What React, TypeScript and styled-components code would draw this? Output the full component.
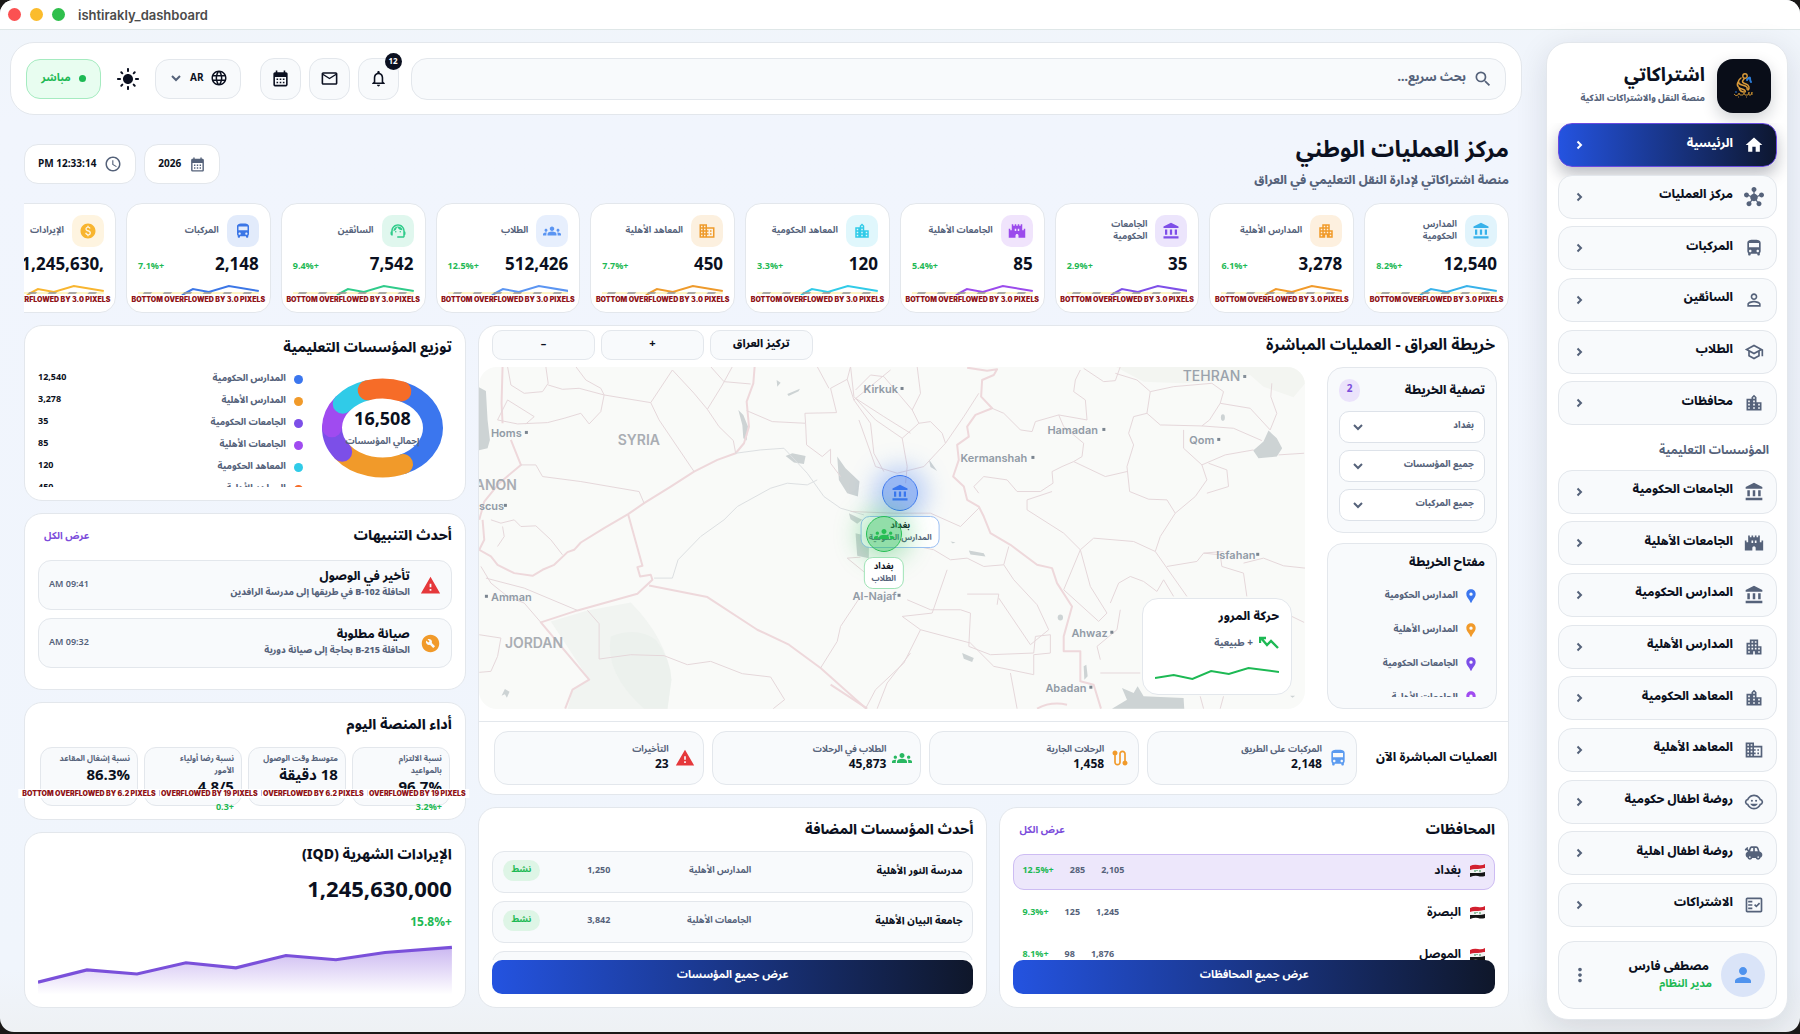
import React from "react";
import styled, { createGlobalStyle, css } from "styled-components";
import type { IconType } from "react-icons";
import {
  MdAccessTime,
  MdAccountBalance,
  MdApartment,
  MdBuildCircle,
  MdCalendarMonth,
  MdCastle,
  MdDirectionsBus,
  MdGroups,
  MdHome,
  MdHub,
  MdLanguage,
  MdLightMode,
  MdLocationCity,
  MdLocationPin,
  MdMailOutline,
  MdMoreVert,
  MdNotificationsNone,
  MdOutlineBusiness,
  MdOutlineChildCare,
  MdOutlineFactCheck,
  MdOutlineSchool,
  MdPaid,
  MdPerson,
  MdPersonOutline,
  MdRoute,
  MdSearch,
  MdSupportAgent,
  MdToys,
  MdWarning,
} from "react-icons/md";

const c = {
  ink: "#0b1020",
  muted: "#55627a",
  line: "#e3e7ec",
  soft: "#f8fafc",
  green: "#1db954",
  purple: "#7c4ddb",
  blue: "#3b76ee",
  orange: "#f19a2a",
  violet: "#a04bf0",
  cyan: "#30cbe8",
  coral: "#f66c28",
  red: "#e5383b",
};

const Global = createGlobalStyle`
  *, *::before, *::after { box-sizing: border-box; }
  html { background: #1b1918; }
  body { margin: 0; font-family: "Noto Sans Arabic", "Noto Kufi Arabic", "Noto Sans", "DejaVu Sans", sans-serif; color: ${c.ink}; }
  button, input, select { font: inherit; color: inherit; }
  h1, h2, h3, p, ul { margin: 0; padding: 0; }
  ul { list-style: none; }
  a { color: inherit; text-decoration: none; }
`;

/* ---------- window frame ---------- */

const Window = styled.div`
  display: flex;
  flex-direction: column;
  height: calc(100vh - 2px);
  min-height: 960px;
  border-radius: 14px;
  overflow: hidden;
  background: linear-gradient(#f0f5fa, #f1f5fd 12%, #f0f5fc 94%, #eef1f4);
`;

const TitleBar = styled.header`
  display: flex;
  align-items: center;
  gap: 9px;
  height: 30px;
  padding: 0 8px;
  background: #fff;
  border-bottom: 1px solid #dfe7e8;
  font: 600 13px/16px Inter, sans-serif;
  color: #4b4b4b;
`;

const Light = styled.button<{ $color: string }>`
  width: 13px;
  height: 13px;
  padding: 0;
  border: 0;
  border-radius: 50%;
  background: ${(p) => p.$color};
`;

const WindowName = styled.span`
  margin-left: 4px;
`;

const Body = styled.div`
  display: flex;
  flex: 1;
  gap: 24px;
  min-height: 0;
  padding: 12px 12px 12px 10px;
`;

/* ---------- sidebar ---------- */

const Sidebar = styled.aside`
  display: flex;
  flex-direction: column;
  width: 242px;
  flex: none;
  background: #fff;
  border: 1px solid ${c.line};
  border-radius: 22px;
  box-shadow: 0 8px 32px rgba(15, 23, 42, 0.12);
`;

const Brand = styled.div`
  display: flex;
  align-items: center;
  gap: 12px;
  height: 80px;
  padding: 6px 16px 0;
`;

const Logo = styled.div`
  display: grid;
  place-items: center;
  flex: none;
  width: 54px;
  height: 54px;
  border-radius: 16px;
  background: #090d18;
  box-shadow: 0 6px 16px rgba(15, 23, 42, 0.2);
`;

const BrandName = styled.p`
  font-size: 19px;
  line-height: 28px;
  font-weight: 700;
`;

const BrandNote = styled.p`
  padding-bottom: 2px;
  font-size: 9px;
  line-height: 20px;
  font-weight: 800;
  color: ${c.muted};
  white-space: nowrap;
`;

const NavList = styled.ul`
  display: flex;
  flex: 1;
  flex-direction: column;
  justify-content: space-between;
  min-height: 0;
  padding: 0 10px 0 11px;
  overflow: hidden;
`;

const NavHeading = styled.li`
  height: 29px;
  padding: 0 8px;
  font-size: 12px;
  line-height: 36px;
  font-weight: 700;
  color: ${c.muted};
`;

const NavLink = styled.a<{ $active?: boolean }>`
  display: flex;
  align-items: center;
  gap: 11px;
  height: 44px;
  padding: 0 12px;
  border: 1px solid ${c.line};
  border-radius: 14px;
  background: ${c.soft};
  font-size: 12px;
  line-height: 20px;
  font-weight: 800;
  svg {
    flex: none;
    color: ${c.muted};
  }
  span {
    padding-bottom: 3px;
  }
  ${(p) =>
    p.$active &&
    css`
      color: #fff;
      border-color: #6a4be0;
      background: linear-gradient(to right, #2453e0, #0d1730);
      box-shadow: 0 8px 16px rgba(15, 23, 42, 0.28);
      svg {
        color: #fff;
      }
    `}
`;

const Grow = styled.span`
  flex: 1;
  min-width: 0;
`;

const UserCard = styled.div`
  display: flex;
  align-items: center;
  gap: 9px;
  height: 68px;
  margin: 14px 10px 10px 11px;
  padding: 0 11px 0 10px;
  border: 1px solid ${c.line};
  border-radius: 16px;
  background: ${c.soft};
`;

const Avatar = styled.span`
  display: grid;
  place-items: center;
  width: 44px;
  height: 44px;
  border-radius: 50%;
  background: #dae4f8;
  color: #4f93ee;
`;

const UserName = styled.p`
  padding-right: 3px;
  font-size: 12px;
  line-height: 18px;
  font-weight: 800;
`;

const UserRole = styled.p`
  font-size: 11px;
  line-height: 16px;
  font-weight: 700;
  color: ${c.green};
`;

const PlainButton = styled.button`
  display: grid;
  place-items: center;
  padding: 0;
  border: 0;
  background: none;
  color: ${c.muted};
`;

const ThemeButton = styled(PlainButton)`
  margin: 0 3px;
  color: ${c.ink};
`;

/* ---------- top bar ---------- */

const Main = styled.main`
  display: flex;
  flex: 1;
  flex-direction: column;
  min-width: 0;
`;

const TopBar = styled.div`
  display: flex;
  align-items: center;
  gap: 12px;
  flex: none;
  height: 73px;
  padding: 0 15px;
  border: 1px solid ${c.line};
  border-radius: 24px;
  background: #fff;
`;

const SearchBox = styled.label`
  display: flex;
  align-items: center;
  gap: 5px;
  flex: 1;
  height: 42px;
  padding: 0 12px;
  border: 1px solid ${c.line};
  border-radius: 16px;
  background: ${c.soft};
  color: ${c.muted};
  input {
    flex: 1;
    min-width: 0;
    border: 0;
    outline: 0;
    background: none;
    padding: 0 2px 2px;
    font-size: 12px;
    line-height: 20px;
    font-weight: 800;
    &::placeholder {
      color: ${c.muted};
      opacity: 1;
    }
  }
`;

const IconGroup = styled.div`
  display: flex;
  gap: 8px;
`;

const IconButton = styled.button`
  position: relative;
  display: grid;
  place-items: center;
  width: 41px;
  height: 42px;
  padding: 0;
  border: 1px solid ${c.line};
  border-radius: 14px;
  background: ${c.soft};
`;

const Counter = styled.span`
  position: absolute;
  top: -6px;
  right: -4px;
  width: 17px;
  height: 17px;
  border-radius: 9px;
  background: ${c.ink};
  color: #fff;
  font-size: 8px;
  line-height: 17px;
  font-weight: 700;
  text-align: center;
`;

const Pill = styled.button<{ $live?: boolean }>`
  display: flex;
  align-items: center;
  justify-content: center;
  gap: 8px;
  min-width: 75px;
  height: 40px;
  padding: 0 12px 1px;
  border: 1px solid ${(p) => (p.$live ? "#a5ebc0" : c.line)};
  border-radius: 14px;
  background: ${(p) => (p.$live ? "#e8fdf0" : c.soft)};
  color: ${(p) => (p.$live ? c.green : c.ink)};
  font-size: 11px;
  line-height: 20px;
  font-weight: 700;
`;

const LangPill = styled(Pill)`
  gap: 6px;
  min-width: 85px;
  margin-right: 7px;
  font-size: 10px;
`;

const Dot = styled.span<{ $color: string; $size: number }>`
  flex: none;
  width: ${(p) => p.$size}px;
  height: ${(p) => p.$size}px;
  border-radius: 50%;
  background: ${(p) => p.$color};
`;

/* ---------- page ---------- */

const Page = styled.div`
  display: flex;
  flex: 1;
  flex-direction: column;
  min-height: 0;
  padding: 16px 13px 12px 14px;
`;

const PageHead = styled.div`
  display: flex;
  justify-content: space-between;
  height: 72px;
  flex: none;
`;

const PageTitle = styled.h1`
  font-size: 23px;
  line-height: 38px;
  font-weight: 700;
`;

const PageNote = styled.p`
  font-size: 12px;
  line-height: 24px;
  font-weight: 800;
  color: ${c.muted};
`;

const Chips = styled.div`
  display: flex;
  gap: 8px;
  padding-top: 13px;
`;

const Chip = styled.span`
  display: flex;
  align-items: center;
  gap: 8px;
  height: 40px;
  padding: 0 13px;
  border: 1px solid ${c.line};
  border-radius: 14px;
  background: #fff;
  font-size: 10px;
  line-height: 20px;
  font-weight: 700;
  svg {
    color: ${c.muted};
  }
`;

const KpiRow = styled.ul`
  display: flex;
  gap: 10px;
  flex: none;
  height: 110px;
  margin-bottom: 12px;
  overflow: hidden;
`;

const KpiCard = styled.li`
  position: relative;
  display: flex;
  flex: none;
  flex-direction: column;
  width: 9.75%;
  padding: 11px;
  border: 1px solid ${c.line};
  border-radius: 16px;
  background: #fff;
`;

const KpiHead = styled.div`
  display: flex;
  align-items: center;
  gap: 8px;
  height: 32px;
`;

const KpiIcon = styled.span<{ $color: string }>`
  display: grid;
  place-items: center;
  flex: none;
  width: 32px;
  height: 32px;
  border-radius: 10px;
  color: ${(p) => p.$color};
  background: ${(p) => p.$color}26;
`;

const KpiLabel = styled.h3<{ $wrap?: boolean }>`
  width: ${(p) => (p.$wrap ? "48px" : "auto")};
  font-size: 9px;
  line-height: 12px;
  font-weight: 700;
  color: ${c.muted};
  white-space: ${(p) => (p.$wrap ? "normal" : "nowrap")};
`;

const KpiFigures = styled.div`
  display: flex;
  align-items: center;
  justify-content: space-between;
  height: 36px;
`;

const KpiValue = styled.bdi<{ $size?: number }>`
  font-size: ${(p) => p.$size ?? 17}px;
  line-height: 24px;
  font-weight: 700;
`;

const Delta = styled.span`
  font-size: 9px;
  line-height: 16px;
  font-weight: 700;
  color: ${c.green};
`;

const KpiDelta = styled(Delta)`
  padding-top: 4px;
`;

const Spark = styled.svg`
  display: block;
  width: 100%;
  height: 13px;
`;

const Overflowed = styled.span`
  position: absolute;
  height: 9px;
  background: #fff;
  color: #8f1216;
  font: 900 7px/9px Inter, sans-serif;
  text-align: center;
  white-space: nowrap;
  direction: ltr;
`;

const KpiWarning = styled(Overflowed)`
  bottom: 8px;
  left: 2px;
  right: 2px;
`;

const Board = styled.div`
  display: flex;
  flex: 1;
  gap: 12px;
  min-height: 0;
`;

const Column = styled.div<{ $grow: number; $rows: string }>`
  display: grid;
  flex: ${(p) => p.$grow} 1 0;
  grid-template-rows: ${(p) => p.$rows};
  gap: 12px;
  min-width: 0;
  min-height: 0;
`;

const Split = styled.div`
  display: grid;
  grid-template-columns: 1fr 1fr;
  gap: 12px;
  min-height: 0;
`;

const Card = styled.section<{ $flush?: boolean }>`
  display: flex;
  flex-direction: column;
  min-width: 0;
  min-height: 0;
  padding: ${(p) => (p.$flush ? "0" : "8px 13px 13px")};
  border: 1px solid ${c.line};
  border-radius: 18px;
  background: #fff;
`;

const CardHead = styled.div<{ $after?: number }>`
  display: flex;
  align-items: center;
  justify-content: space-between;
  flex: none;
  height: 28px;
  margin-bottom: ${(p) => p.$after ?? 0}px;
`;

const CardTitle = styled.h2<{ $large?: boolean }>`
  font-size: ${(p) => (p.$large ? 16 : 14)}px;
  line-height: 24px;
  font-weight: ${(p) => (p.$large ? 700 : 800)};
`;

const SmallTitle = styled.h3`
  font-size: 12px;
  line-height: 20px;
  font-weight: 800;
  white-space: nowrap;
`;

const MoreLink = styled.a`
  padding: 0 6px;
  font-size: 10px;
  line-height: 20px;
  font-weight: 700;
  color: ${c.purple};
`;

/* ---------- map card ---------- */

const MapHead = styled.div`
  display: flex;
  align-items: center;
  justify-content: space-between;
  flex: none;
  height: 41px;
  padding: 0 13px 4px;
`;

const MapTools = styled.div`
  display: flex;
  gap: 6px;
`;

const MapTool = styled.button`
  width: 103px;
  height: 30px;
  padding: 0 0 2px;
  border: 1px solid ${c.line};
  border-radius: 10px;
  background: ${c.soft};
  font-size: 11px;
  line-height: 20px;
  font-weight: 800;
`;

const MapRow = styled.div`
  display: flex;
  flex: 1;
  gap: 22px;
  min-height: 0;
  padding-right: 11px;
`;

const MapSide = styled.div`
  display: flex;
  flex-direction: column;
  gap: 10px;
  width: 170px;
  flex: none;
`;

const SideBox = styled.div<{ $fill?: boolean }>`
  display: flex;
  flex: ${(p) => (p.$fill ? "1" : "none")};
  flex-direction: column;
  gap: ${(p) => (p.$fill ? 6 : 7)}px;
  min-height: 0;
  padding: 9px 11px 11px;
  border: 1px solid ${c.line};
  border-radius: 16px;
  background: ${c.soft};
`;

const SideHead = styled.div`
  display: flex;
  align-items: center;
  justify-content: space-between;
  height: 27px;
`;

const Badge = styled.span`
  width: 21px;
  height: 23px;
  border-radius: 12px;
  background: #ebe3fb;
  color: ${c.purple};
  font-size: 10px;
  line-height: 20px;
  font-weight: 700;
  text-align: center;
`;

const SelectBox = styled.div`
  position: relative;
  select {
    display: block;
    width: 100%;
    height: 32px;
    padding: 0 10px 2px 36px;
    border: 1px solid #dde2e9;
    border-radius: 10px;
    background: #fff;
    appearance: none;
    color: ${c.muted};
    font-size: 9px;
    line-height: 16px;
    font-weight: 800;
  }
  svg {
    position: absolute;
    left: 11px;
    top: 8px;
    color: ${c.muted};
    pointer-events: none;
  }
`;

const LegendList = styled.ul`
  flex: 1;
  min-height: 0;
  overflow: hidden;
`;

const LegendItem = styled.li`
  display: flex;
  align-items: center;
  gap: 5px;
  height: 34px;
  padding: 0 6px;
  font-size: 9px;
  line-height: 16px;
  font-weight: 800;
  color: ${c.muted};
`;

const MapCanvas = styled.div`
  position: relative;
  flex: 1;
  min-width: 0;
  border-radius: 18px;
  overflow: hidden;
  background: #f9faf8;
`;

const MapArt = styled.svg`
  display: block;
  width: 100%;
  height: 100%;
  font-family: Inter, sans-serif;
`;

const Marker = styled.span<{ $rgb: string }>`
  position: absolute;
  display: grid;
  place-items: center;
  width: 36px;
  height: 36px;
  margin: -18px 0 0 -18px;
  border: 1px solid rgb(${(p) => p.$rgb});
  border-radius: 50%;
  background: rgba(${(p) => p.$rgb}, 0.5);
  color: rgb(${(p) => p.$rgb});
  box-shadow: 0 0 24px 8px rgba(${(p) => p.$rgb}, 0.36);
`;

const MarkerCard = styled.span<{ $edge: string }>`
  position: absolute;
  padding: 3px 7px;
  border: 1px solid ${(p) => p.$edge};
  border-radius: 9px;
  background: rgba(255, 255, 255, 0.94);
  font-size: 9px;
  line-height: 12px;
  font-weight: 700;
  text-align: center;
  white-space: nowrap;
  transform: translateX(-50%);
  small {
    display: block;
    font-size: 8px;
    color: ${c.muted};
  }
`;

const Traffic = styled.div`
  position: absolute;
  right: 13px;
  bottom: 14px;
  width: 150px;
  height: 97px;
  padding: 8px 12px;
  border: 1px solid ${c.line};
  border-radius: 16px;
  background: #fff;
`;

const TrafficState = styled.p`
  display: flex;
  align-items: center;
  gap: 6px;
  height: 32px;
  font-size: 10px;
  line-height: 16px;
  font-weight: 700;
  color: ${c.muted};
`;

const TrafficSpark = styled.svg`
  display: block;
  width: 100%;
  height: 18px;
  margin-top: 5px;
`;

const LiveRow = styled.div`
  display: flex;
  align-items: center;
  gap: 8px;
  flex: none;
  height: 73px;
  margin-top: 12px;
  padding: 0 11px 0 15px;
  border-top: 1px solid ${c.line};
`;

const LiveTitle = styled.div`
  flex: none;
  width: 132px;
`;

const Stat = styled.div`
  display: flex;
  align-items: center;
  gap: 6px;
  flex: 1;
  height: 54px;
  padding: 0 8px;
  border: 1px solid ${c.line};
  border-radius: 14px;
  background: ${c.soft};
`;

const StatLabel = styled.p`
  font-size: 9px;
  line-height: 14px;
  font-weight: 700;
  color: ${c.muted};
`;

const StatValue = styled.p`
  font-size: 12px;
  line-height: 16px;
  font-weight: 700;
`;

/* ---------- tables ---------- */

const TableClip = styled.div`
  flex: 1;
  min-height: 0;
  overflow: hidden;
`;

const Rows = styled.table`
  display: block;
  tbody {
    display: flex;
    flex-direction: column;
  }
  td {
    padding: 0;
  }
`;

const ProvinceRows = styled(Rows)`
  tbody {
    gap: 6px;
  }
`;

const SchoolRows = styled(Rows)`
  tbody {
    gap: 8px;
  }
`;

const ProvinceRow = styled.tr<{ $on?: boolean }>`
  display: flex;
  align-items: center;
  gap: 16px;
  height: 36px;
  padding: 0 8px 2px;
  border: 1px solid ${(p) => (p.$on ? "#cdbcf3" : "transparent")};
  border-radius: 11px;
  background: ${(p) => (p.$on ? "#ede7fb" : "transparent")};
  font-size: 9px;
  line-height: 16px;
  font-weight: 700;
  color: ${c.muted};
`;

const ProvinceName = styled.td`
  display: flex;
  flex: 1;
  align-items: center;
  gap: 8px;
  color: ${c.ink};
  font-size: 12px;
  line-height: 20px;
`;

const SchoolRow = styled.tr`
  display: grid;
  grid-template-columns: 3fr 2fr 1fr 37px;
  align-items: center;
  height: 42px;
  padding: 0 10px 2px;
  border: 1px solid ${c.line};
  border-radius: 12px;
  background: ${c.soft};
  font-size: 9px;
  line-height: 16px;
  font-weight: 700;
  color: ${c.muted};
`;

const SchoolName = styled.td`
  color: ${c.ink};
  font-size: 10px;
  font-weight: 800;
`;

const Status = styled.span`
  display: block;
  height: 21px;
  border-radius: 11px;
  background: #def5e6;
  color: ${c.green};
  font-size: 9px;
  line-height: 20px;
  text-align: center;
`;

const WideButton = styled.button`
  flex: none;
  height: 34px;
  padding: 0 0 3px;
  border: 0;
  border-radius: 10px;
  background: linear-gradient(to right, #2453e0, #0f172a);
  color: #fff;
  font-size: 11px;
  line-height: 20px;
  font-weight: 700;
`;

/* ---------- left column ---------- */

const ShareRow = styled.div`
  display: flex;
  gap: 18px;
  flex: 1;
  min-height: 0;
  margin-top: 4px;
  padding-right: 8px;
`;

const DonutBox = styled.div`
  position: relative;
  flex: none;
  width: 123px;
  height: 124px;
`;

const DonutText = styled.div`
  position: absolute;
  inset: 0;
  display: flex;
  flex-direction: column;
  align-items: center;
  justify-content: center;
  gap: 4px;
  white-space: nowrap;
`;

const ShareList = styled.ul`
  flex: 1;
  padding-top: 2px;
  overflow: hidden;
`;

const ShareItem = styled.li`
  display: flex;
  align-items: center;
  gap: 8px;
  height: 22px;
  font-size: 9px;
  line-height: 16px;
  font-weight: 800;
  color: ${c.muted};
  b {
    padding-bottom: 3px;
    font-weight: 700;
    color: ${c.ink};
  }
`;

const AlertList = styled.ul`
  display: flex;
  flex-direction: column;
  gap: 8px;
  margin-top: 10px;
`;

const AlertItem = styled.li`
  display: flex;
  align-items: center;
  gap: 10px;
  height: 50px;
  padding: 0 10px;
  border: 1px solid ${c.line};
  border-radius: 13px;
  background: ${c.soft};
`;

const AlertNote = styled.p`
  font-size: 9px;
  line-height: 16px;
  font-weight: 800;
  color: ${c.muted};
`;

const AlertTime = styled(AlertNote)`
  font-weight: 600;
`;

const AlertTitle = styled.h3`
  font-size: 12px;
  line-height: 16px;
  font-weight: 800;
`;

const ScoreGrid = styled.ul`
  display: grid;
  grid-template-columns: repeat(4, 1fr);
  gap: 6px;
  margin-top: 8px;
  padding: 0 2px;
`;

const Score = styled.li`
  position: relative;
  height: 59px;
  padding: 5px 7px 0 6px;
  border: 1px solid ${c.line};
  border-radius: 12px;
  background: ${c.soft};
`;

const ScoreLabel = styled.p`
  font-size: 8px;
  line-height: 12px;
  font-weight: 700;
  color: ${c.muted};
  white-space: pre-line;
`;

const ScoreValue = styled.p`
  font-size: 15px;
  line-height: 20px;
  font-weight: 700;
  white-space: nowrap;
`;

const ScoreDelta = styled.p`
  margin-top: 5px;
  font-size: 9px;
  line-height: 12px;
  font-weight: 700;
  color: ${c.green};
`;

const ScoreWarning = styled(Overflowed)`
  top: 41px;
  left: 50%;
  padding: 0 4px;
  transform: translateX(-50%);
`;

const Revenue = styled.p`
  margin-top: 5px;
  font-size: 22px;
  line-height: 32px;
  font-weight: 700;
`;

const Growth = styled.p`
  margin-top: 9px;
  font-size: 12px;
  line-height: 16px;
  font-weight: 700;
  color: ${c.green};
`;

const AreaChart = styled.svg`
  display: block;
  flex: 1;
  width: 100%;
  min-height: 0;
`;

/* ---------- data ---------- */

type NavEntry = { label: string; icon: IconType };

const primaryNav: NavEntry[] = [
  { label: "الرئيسية", icon: MdHome },
  { label: "مركز العمليات", icon: MdHub },
  { label: "المركبات", icon: MdDirectionsBus },
  { label: "السائقين", icon: MdPersonOutline },
  { label: "الطلاب", icon: MdOutlineSchool },
  { label: "محافظات", icon: MdLocationCity },
];

const schoolNav: NavEntry[] = [
  { label: "الجامعات الحكومية", icon: MdAccountBalance },
  { label: "الجامعات الأهلية", icon: MdCastle },
  { label: "المدارس الحكومية", icon: MdAccountBalance },
  { label: "المدارس الأهلية", icon: MdApartment },
  { label: "المعاهد الحكومية", icon: MdLocationCity },
  { label: "المعاهد الأهلية", icon: MdOutlineBusiness },
  { label: "روضة اطفال حكومية", icon: MdOutlineChildCare },
  { label: "روضة اطفال اهلية", icon: MdToys },
  { label: "الاشتراكات", icon: MdOutlineFactCheck },
];

const kpis = [
  { label: "المدارس الحكومية", value: "12,540", delta: "+8.2%", color: "#38b2ea", icon: MdAccountBalance, wrap: true },
  { label: "المدارس الأهلية", value: "3,278", delta: "+6.1%", color: "#f19a2a", icon: MdApartment },
  { label: "الجامعات الحكومية", value: "35", delta: "+2.9%", color: "#7e4fe8", icon: MdAccountBalance, wrap: true },
  { label: "الجامعات الأهلية", value: "85", delta: "+5.4%", color: "#9b4bec", icon: MdCastle },
  { label: "المعاهد الحكومية", value: "120", delta: "+3.3%", color: "#30cbe8", icon: MdLocationCity },
  { label: "المعاهد الأهلية", value: "450", delta: "+7.7%", color: "#ee9a2b", icon: MdOutlineBusiness },
  { label: "الطلاب", value: "512,426", delta: "+12.5%", color: "#5b95f2", icon: MdGroups },
  { label: "السائقين", value: "7,542", delta: "+9.4%", color: "#2fcb8a", icon: MdSupportAgent },
  { label: "المركبات", value: "2,148", delta: "+7.1%", color: "#3b76e6", icon: MdDirectionsBus },
  { label: "الإيرادات", value: "...1,245,630,", delta: "", color: "#f8b52f", icon: MdPaid },
];

const shares = [
  { label: "المدارس الحكومية", value: "12,540", color: c.blue },
  { label: "المدارس الأهلية", value: "3,278", color: c.orange },
  { label: "الجامعات الحكومية", value: "35", color: "#7c4fe8" },
  { label: "الجامعات الأهلية", value: "85", color: c.violet },
  { label: "المعاهد الحكومية", value: "120", color: c.cyan },
  { label: "المعاهد الأهلية", value: "450", color: c.coral },
];

// Start and end angle of each ring segment, in degrees clockwise from three o'clock.
const arcs = [-66, 66, 143, 181, 218, 253, 292];

const ringPoint = (deg: number) => {
  const a = (deg * Math.PI) / 180;
  return `${(61.5 + 50.5 * Math.cos(a)).toFixed(1)} ${(62 + 39.5 * Math.sin(a)).toFixed(1)}`;
};

const stats = [
  { label: "المركبات على الطريق", value: "2,148", icon: MdDirectionsBus, color: "#5b9bf0" },
  { label: "الرحلات الجارية", value: "1,458", icon: MdRoute, color: c.orange },
  { label: "الطلاب في الرحلات", value: "45,873", icon: MdGroups, color: "#29b862" },
  { label: "التأخيرات", value: "23", icon: MdWarning, color: c.red },
];

const provinces = [
  { name: "بغداد", a: "2,105", b: "285", delta: "+12.5%" },
  { name: "البصرة", a: "1,245", b: "125", delta: "+9.3%" },
  { name: "الموصل", a: "1,876", b: "98", delta: "+8.1%" },
];

const schools = [
  { name: "مدرسة النور الأهلية", type: "المدارس الأهلية", count: "1,250" },
  { name: "جامعة البيان الأهلية", type: "الجامعات الأهلية", count: "3,842" },
  { name: "معهد الرافدين", type: "المعاهد الأهلية", count: "640" },
];

const scores = [
  { label: "نسبة الالتزام\nبالمواعيد", value: "96.7%", delta: "+3.2%", over: "19" },
  { label: "متوسط وقت الوصول", value: "18 دقيقة", delta: "", over: "6.2" },
  { label: "نسبة رضا أولياء\nالأمور", value: "4.8/5", delta: "+0.3", over: "19" },
  { label: "نسبة إشغال المقاعد", value: "86.3%", delta: "", over: "6.2" },
];

const cities = [
  { name: "Kirkuk", x: 385, y: 26, dot: 424 },
  { name: "Homs", x: 12, y: 70, dot: 48 },
  { name: "Amman", x: 12, y: 234, dot: 8 },
  { name: "Al-Najaf", x: 374, y: 233, dot: 421 },
  { name: "Hamadan", x: 569, y: 67, dot: 626 },
  { name: "Kermanshah", x: 482, y: 95, dot: 555 },
  { name: "Qom", x: 711, y: 77, dot: 741 },
  { name: "Isfahan", x: 738, y: 192, dot: 780 },
  { name: "Ahwaz", x: 593, y: 270, dot: 634 },
  { name: "Abadan", x: 567, y: 325, dot: 613 },
  { name: "scus", x: 0, y: 143, dot: 27 },
];

const filters = ["بغداد", "جميع المؤسسات", "جميع المركبات"];

/* ---------- drawings ---------- */

const BrandMark = () => (
  <svg width="24" height="28" viewBox="0 0 24 28" aria-hidden="true" fill="none">
    <circle cx="13" cy="4" r="2.2" stroke="#d99a3a" strokeWidth="1.4" />
    <path d="M9 6c-4 3-3 6 1 7s6 2 5 4M12 7c-3 3-1 4 2 5s4 4 2 6M6 10c-2 4 1 6 4 7s4 2 3 3M7 16c1 3 3 4 5 4" stroke="#d99a3a" strokeWidth="1.5" strokeLinecap="round" />
    <path d="M15 8c1-2 3-3 3-2s0 3 1 4" stroke="#2b7bd6" strokeWidth="2" strokeLinecap="round" />
    <path d="M2 22q2 3 4 1l1-2 1 2h3l1-2 1 2h3l1-3v3h2l1-3v3M6 25h1M14 25h1" stroke="#b9852f" strokeWidth="1" />
    <path d="M3 20h2" stroke="#2b7bd6" strokeWidth="1" />
  </svg>
);

const ChevronRight = () => (
  <svg width="16" height="16" viewBox="0 0 16 16" fill="none" stroke="currentColor" strokeWidth="2" aria-hidden="true">
    <path d="M6.5 4.5L10 8l-3.500 3.500" />
  </svg>
);

const ChevronDown = () => (
  <svg width="16" height="16" viewBox="0 0 16 16" fill="none" stroke={c.muted} strokeWidth="2" aria-hidden="true">
    <path d="M4 6l4 4 4-4" />
  </svg>
);

const TrendMark = () => (
  <svg width="20" height="14" viewBox="0 0 20 14" fill="none" stroke={c.green} strokeWidth="2.4" aria-hidden="true">
    <path d="M2 2l6 7 4-4 7 7M1 7V2h6" />
  </svg>
);

const Flag = () => (
  <svg width="17" height="13" viewBox="0 0 17 13" aria-hidden="true">
    <path d="M1 2q4-2 8-1t7-1v4q-4 1-7 1t-8 1z" fill="#d2202f" />
    <path d="M1 6q4-1 8-1t7-1v4q-4 1-7 1t-8 0z" fill="#f4f4f4" />
    <path d="M1 9q4 0 8 0t7-1v4q-4 1-7 0t-8 1z" fill="#151515" />
    <path d="M5 7h2M8 6v1M10 7h2" stroke="#2f8f4e" strokeWidth="1" />
  </svg>
);

const KpiSpark = ({ color, id }: { color: string; id: string }) => (
  <Spark viewBox="0 0 121 13" preserveAspectRatio="none" aria-hidden="true">
    <defs>
      <pattern id={id} width="20" height="4" patternUnits="userSpaceOnUse">
        <rect width="20" height="4" fill="#fbf3b8" />
        <path d="M4 4l3-4h8l-3 4z" fill="#9a9a94" />
      </pattern>
    </defs>
    <path d="M44 12L55 6L71 9L91 3L121 8" fill="none" stroke={color} strokeWidth="2" />
    <rect y="9" width="121" height="2" fill={`url(#${id})`} opacity=".85" />
  </Spark>
);

const RegionMap = () => (
  <MapArt viewBox="0 0 827 342" preserveAspectRatio="xMidYMid slice" role="img" aria-label="خريطة العراق">
    <g transform="translate(-8 -47) scale(.3333)" fill="none" strokeLinejoin="round">
      <path d="M240 905L350 872L480 848Q590 960 602 1080L590 1170H290L305 1110L355 1080z" fill="#f1f4f1" />
      <path d="M420 950Q500 920 555 960Q600 1020 602 1080L590 1167H520Q400 1060 420 950z" fill="#ecf1ed" />
      <g fill="#cdd3d4">
        <path d="M20 200L45 213L50 300L57 360L50 385L20 392z" />
        <path d="M1100 410L1125 445L1167 485L1162 530L1130 520L1105 480z" />
        <path d="M945 408L965 400L1005 408L1000 432L970 428z" />
        <path d="M1135 580L1175 600L1160 612L1140 598zM1155 640L1195 650L1195 715L1160 708z" />
        <path d="M803 270L818 285L832 320L828 362L818 355L815 315z" />
        <path d="M918 180l12 8-10 12zM950 222l38-16-4 8-30 14zM92 1128l10-20 14 8-8 18-6-10z" />
      </g>
      <g stroke="#eed8db" strokeWidth="6">
        <path d="M852 140L848 190L828 245L835 320L820 370L795 400L740 420L670 455L600 500L520 550L472 583L400 625L330 668L310 690L290 697L250 735L215 750L185 768L130 760L80 735L60 710L25 690" />
        <path d="M472 583L515 738L500 742L508 770L540 765L545 780L500 822L320 872L210 908L355 1080L305 1110L283 1167" />
        <path d="M535 797L710 832L860 930L955 975L1050 1045L1187 1167" />
        <path d="M25 600L40 545L85 490L150 435L128 380L120 360M95 140L92 250L95 310M25 690L40 660L35 600" />
      </g>
      <g stroke="#e5d7da" strokeWidth="3">
        <path d="M110 140L120 195L160 220L215 215L232 190L225 140M232 195L275 208L325 205L400 225L390 275L355 312L330 280L280 295L230 308L140 312L80 300L110 240L190 290L165 312" />
        <path d="M315 140L345 180L390 205L400 225L540 248L605 150L670 220L710 268L745 320L788 362L795 400M540 248L565 300L670 455M710 268L755 195L785 140M720 140L760 185L840 192M828 272L905 305L1005 310L1003 280L1098 278L1080 205L1130 178L1150 240L1200 310L1210 400L1240 455" />
        <path d="M1005 310L1008 375L1055 410L1080 388L1080 430L1110 470M1040 140L1075 205M1130 178L1140 140M1150 240L1260 150M1155 235L1240 290L1320 340" />
        <path d="M150 435L195 435L215 470L330 485L505 515L520 550M60 600L90 610L130 600L150 620L195 618L240 660L275 705M80 680L100 650L95 620M30 740L60 790L110 830L160 850L210 908M45 775L160 805L320 872M25 945L90 955L80 1010L60 1055L25 1058" />
        <path d="M350 872L385 912L385 1018L480 1005L580 1008L650 1035L720 1025L815 1062L900 1072L942 1140L908 1167" />
        <path d="M795 400L870 390L940 385L1010 460L1060 530L1110 565L1180 585M550 775L605 775L622 720L690 650L760 600L800 560L900 505L950 490L1010 495L1040 480" stroke="#dcdfe1" />
        <path d="M1170 830L1110 920L1100 965L1050 1045M1320 1000L1250 1090L1220 1167M1130 715L1185 760M1130 715L1170 712" />
      </g>
    </g>
    <g transform="translate(372 -47) scale(.3333)" fill="none" strokeLinejoin="round">
      <path d="M795 140H1365V190L1330 232L1240 200L1200 165L1120 180L1000 190L880 185z" fill="#f3f5f1" />
      <g fill="#cdd3d4">
        <path d="M1255 332L1280 355L1296 385L1280 410L1225 415L1209 392L1240 365z" />
        <path d="M815 1105L850 1120L862 1100L880 1130L1000 1135L1002 1167H785L830 1140z" />
        <path d="M335 1000l35 15-5 12-25-10zM700 1040l8-5 4 35-10 10zM355 692l45 8 5 10-45-6zM235 418l25 35-20-12z" />
        <ellipse cx="1118" cy="293" rx="6" ry="10" />
        <ellipse cx="630" cy="893" rx="8" ry="9" />
        <path d="M1320 1128l15 0-8 6zM300 665l15 2-8 4z" />
      </g>
      <g stroke="#eed8db" strokeWidth="6">
        <path d="M350 143L410 152L440 148L430 165L395 180L392 230L425 265L375 285L350 320L355 350L320 375L325 420L308 470L340 500L350 540L385 560L400 590L420 640L480 675L560 735L605 745L620 790L665 860L640 950L640 995L690 995L690 1085L730 1095L752 1167" />
        <path d="M560 1167Q600 1145 650 1155M-60 1095L50 1167" />
      </g>
      <g stroke="#e5d7da" strokeWidth="3">
        <path d="M425 265L460 280L510 330L545 335L555 305L625 285L710 300L705 240L670 215L675 180L690 150M700 145L760 185L795 182L810 140M795 160L860 180L900 215L890 280L850 290L835 340L850 375L830 440L838 515L895 538L950 540L975 580L930 650L915 695L850 665L730 655L690 690L640 810L745 905L770 880L720 800L690 690" />
        <path d="M900 215L970 200L1085 190L1120 215L1110 250L1078 300L1055 318L930 315L890 280M1110 250L1200 265L1260 330L1280 280L1262 230L1265 190M1055 318L1150 325L1235 362M1000 330L1000 385L1055 435L1125 405L1210 390M1285 405L1362 400M1055 435L1070 480L1035 530L975 580M1075 430L1130 450L1135 500L1070 520" />
        <path d="M625 285L640 320L700 370L695 410L670 425L635 440L605 455L608 490L570 515L500 515L470 480L400 470L370 500L385 520M670 425L765 470L830 455M605 515L530 540L530 570L640 640L690 690M915 695L1010 830M950 740L1040 725L1060 700L1110 705L1115 740L1180 760L1190 830M1060 700L1120 695M1180 730L1240 715L1300 738L1365 745M780 850L805 790L840 770L880 785L920 815L940 780L970 830M1325 890L1362 908" />
        <path d="M0 140L10 230L75 300L155 355L170 440L165 490M200 140L210 220L185 270L100 170L60 165L15 210M185 270L205 310L240 305L275 340L285 370L340 290L385 220M155 355L205 310M25 300L75 440L140 460L220 440L285 370" />
        <path d="M0 575L130 580L240 580L330 620L385 565M180 675L250 690L300 720L350 715L400 740L460 735L475 680M460 735L490 780L560 855L595 930L540 975L445 835M350 823H445L440 855M170 840L240 870L330 870L360 880L355 980L420 1005L550 1000L555 950L600 945L600 1000L550 1005L550 1065L430 1040L360 970L210 930L155 890L245 880M245 880L290 750M210 930L160 1030L75 1110L45 1167M480 1060L500 1167" />
        <path d="M750 1020L740 980L800 930L810 870M750 1060L870 1060M1050 1130L1060 1167M1120 1130L1110 1167" />
      </g>
    </g>
    <g fill="#a9adb3" fontSize="14" fontWeight="600">
      <text x="139" y="78">SYRIA</text>
      <text x="26" y="281">JORDAN</text>
      <text x="38" y="123" textAnchor="end">ANON</text>
      <text x="762" y="14" textAnchor="end" fill="#9aa2ab" fontWeight="500">TEHRAN</text>
      <rect x="765" y="8" width="3" height="3" fill="#858f99" />
    </g>
    <g fill="#919ba6" fontSize="11" fontWeight="600">
      {cities.map((city) => (
        <g key={city.name}>
          <text x={city.x} y={city.y}>{city.name}</text>
          <rect x={city.dot - 2} y={city.y - 6} width="3" height="3" fill="#7b8590" />
        </g>
      ))}
    </g>
  </MapArt>
);

/* ---------- parts ---------- */

const NavRow = ({ entry, active }: { entry: NavEntry; active?: boolean }) => (
  <li>
    <NavLink href="#" $active={active}>
      <entry.icon size={20} />
      <Grow>{entry.label}</Grow>
      <ChevronRight />
    </NavLink>
  </li>
);

export default function App() {
  return (
    <>
      <Global />
      <Window>
        <TitleBar>
          <Light $color="#fb5152" aria-label="Close" />
          <Light $color="#fbbc2c" aria-label="Minimize" />
          <Light $color="#2fbf4c" aria-label="Zoom" />
          <WindowName>ishtirakly_dashboard</WindowName>
        </TitleBar>
        <Body dir="rtl">
          <Sidebar>
            <Brand>
              <Logo>
                <BrandMark />
              </Logo>
              <div>
                <BrandName>اشتراكاتي</BrandName>
                <BrandNote>منصة النقل والاشتراكات الذكية</BrandNote>
              </div>
            </Brand>
            <NavList>
              {primaryNav.map((entry, i) => (
                <NavRow key={entry.label} entry={entry} active={i === 0} />
              ))}
              <NavHeading>المؤسسات التعليمية</NavHeading>
              {schoolNav.map((entry) => (
                <NavRow key={entry.label} entry={entry} />
              ))}
            </NavList>
            <UserCard>
              <Avatar>
                <MdPerson size={24} />
              </Avatar>
              <Grow>
                <UserName>مصطفى فارس</UserName>
                <UserRole>مدير النظام</UserRole>
              </Grow>
              <PlainButton aria-label="المزيد">
                <MdMoreVert size={22} />
              </PlainButton>
            </UserCard>
          </Sidebar>

          <Main>
            <TopBar>
              <SearchBox>
                <MdSearch size={20} />
                <input type="text" placeholder="بحث سريع..." aria-label="بحث سريع" />
              </SearchBox>
              <IconGroup>
                <IconButton aria-label="الإشعارات">
                  <MdNotificationsNone size={19} />
                  <Counter>12</Counter>
                </IconButton>
                <IconButton aria-label="الرسائل">
                  <MdMailOutline size={19} />
                </IconButton>
                <IconButton aria-label="التقويم">
                  <MdCalendarMonth size={19} />
                </IconButton>
              </IconGroup>
              <LangPill>
                <MdLanguage size={18} />
                AR
                <ChevronDown />
              </LangPill>
              <ThemeButton aria-label="الوضع النهاري">
                <MdLightMode size={24} />
              </ThemeButton>
              <Pill $live>
                <Dot $color={c.green} $size={7} />
                مباشر
              </Pill>
            </TopBar>

            <Page>
              <PageHead>
                <div>
                  <PageTitle>مركز العمليات الوطني</PageTitle>
                  <PageNote>منصة اشتراكاتي لإدارة النقل التعليمي في العراق</PageNote>
                </div>
                <Chips>
                  <Chip>
                    <MdCalendarMonth size={17} />
                    2026
                  </Chip>
                  <Chip>
                    <MdAccessTime size={18} />
                    12:33:14 PM
                  </Chip>
                </Chips>
              </PageHead>

              <KpiRow>
                {kpis.map((k, i) => (
                  <KpiCard key={k.label}>
                    <KpiHead>
                      <KpiIcon $color={k.color}>
                        <k.icon size={18} />
                      </KpiIcon>
                      <KpiLabel $wrap={k.wrap}>{k.label}</KpiLabel>
                    </KpiHead>
                    <KpiFigures>
                      <KpiValue dir="ltr">{k.value}</KpiValue>
                      <KpiDelta>{k.delta}</KpiDelta>
                    </KpiFigures>
                    <KpiSpark color={k.color} id={`stripe${i}`} />
                    <KpiWarning>BOTTOM OVERFLOWED BY 3.0 PIXELS</KpiWarning>
                  </KpiCard>
                ))}
              </KpiRow>

              <Board>
                <Column $grow={7} $rows="7fr 3fr">
                  <Card $flush>
                    <MapHead>
                      <CardTitle $large>خريطة العراق - العمليات المباشرة</CardTitle>
                      <MapTools>
                        <MapTool>تركيز العراق</MapTool>
                        <MapTool>+</MapTool>
                        <MapTool>–</MapTool>
                      </MapTools>
                    </MapHead>
                    <MapRow>
                      <MapSide>
                        <SideBox>
                          <SideHead>
                            <SmallTitle>تصفية الخريطة</SmallTitle>
                            <Badge>2</Badge>
                          </SideHead>
                          {filters.map((f) => (
                            <SelectBox key={f}>
                              <select aria-label={f} defaultValue={f}>
                                <option>{f}</option>
                              </select>
                              <ChevronDown />
                            </SelectBox>
                          ))}
                        </SideBox>
                        <SideBox $fill>
                          <SmallTitle>مفتاح الخريطة</SmallTitle>
                          <LegendList>
                            {shares.slice(0, 4).map((s) => (
                              <LegendItem key={s.label}>
                                <MdLocationPin size={16} color={s.color} />
                                {s.label}
                              </LegendItem>
                            ))}
                          </LegendList>
                        </SideBox>
                      </MapSide>
                      <MapCanvas dir="ltr">
                        <RegionMap />
                        <Marker $rgb="58, 118, 240" style={{ left: "51%", top: "37%" }}>
                          <MdAccountBalance size={18} />
                        </Marker>
                        <MarkerCard $edge="#9cc0f4" style={{ left: "51%", top: "43.5%" }}>
                          بغداد
                          <small>المدارس الحكومية</small>
                        </MarkerCard>
                        <Marker $rgb="38, 190, 84" style={{ left: "49%", top: "49%" }}>
                          <MdGroups size={20} />
                        </Marker>
                        <MarkerCard $edge="#9fe3b6" style={{ left: "49%", top: "55.5%" }}>
                          بغداد
                          <small>الطلاب</small>
                        </MarkerCard>
                        <Traffic dir="rtl">
                          <SmallTitle>حركة المرور</SmallTitle>
                          <TrafficState>
                            <TrendMark />+ طبيعية
                          </TrafficState>
                          <TrafficSpark viewBox="0 0 126 18" preserveAspectRatio="none" aria-hidden="true">
                            <path d="M0 14L19 11L38 15L57 7L75 10L95 4L126 8" fill="none" stroke={c.green} strokeWidth="2" />
                          </TrafficSpark>
                        </Traffic>
                      </MapCanvas>
                    </MapRow>
                    <LiveRow>
                      <LiveTitle>
                        <SmallTitle>العمليات المباشرة الآن</SmallTitle>
                      </LiveTitle>
                      {stats.map((s) => (
                        <Stat key={s.label}>
                          <s.icon size={20} color={s.color} />
                          <div>
                            <StatLabel>{s.label}</StatLabel>
                            <StatValue>{s.value}</StatValue>
                          </div>
                        </Stat>
                      ))}
                    </LiveRow>
                  </Card>

                  <Split>
                    <Card>
                      <CardHead $after={10}>
                        <CardTitle>المحافظات</CardTitle>
                        <MoreLink href="#">عرض الكل</MoreLink>
                      </CardHead>
                      <TableClip>
                        <ProvinceRows>
                          <tbody>
                            {provinces.map((p, i) => (
                              <ProvinceRow key={p.name} $on={i === 0}>
                                <ProvinceName>
                                  <Flag />
                                  {p.name}
                                </ProvinceName>
                                <td>{p.a}</td>
                                <td>{p.b}</td>
                                <td>
                                  <Delta>{p.delta}</Delta>
                                </td>
                              </ProvinceRow>
                            ))}
                          </tbody>
                        </ProvinceRows>
                      </TableClip>
                      <WideButton>عرض جميع المحافظات</WideButton>
                    </Card>
                    <Card>
                      <CardHead $after={7}>
                        <CardTitle>أحدث المؤسسات المضافة</CardTitle>
                      </CardHead>
                      <TableClip>
                        <SchoolRows>
                          <tbody>
                            {schools.map((s) => (
                              <SchoolRow key={s.name}>
                                <SchoolName>{s.name}</SchoolName>
                                <td>{s.type}</td>
                                <td>{s.count}</td>
                                <td>
                                  <Status>نشط</Status>
                                </td>
                              </SchoolRow>
                            ))}
                          </tbody>
                        </SchoolRows>
                      </TableClip>
                      <WideButton>عرض جميع المؤسسات</WideButton>
                    </Card>
                  </Split>
                </Column>

                <Column $grow={3} $rows="3fr 3fr 2fr 3fr">
                  <Card>
                    <CardHead>
                      <CardTitle>توزيع المؤسسات التعليمية</CardTitle>
                    </CardHead>
                    <ShareRow>
                      <DonutBox>
                        <svg width="123" height="124" viewBox="0 0 123 124" fill="none" strokeWidth="20" strokeLinecap="round" aria-hidden="true">
                          {shares.map((s, i) => (
                            <path
                              key={s.label}
                              stroke={s.color}
                              d={`M${ringPoint(arcs[i])}A50.5 39.5 0 0 1 ${ringPoint(arcs[i + 1])}`}
                            />
                          ))}
                        </svg>
                        <DonutText>
                          <KpiValue $size={18}>16,508</KpiValue>
                          <StatLabel>إجمالي المؤسسات</StatLabel>
                        </DonutText>
                      </DonutBox>
                      <ShareList>
                        {shares.map((s) => (
                          <ShareItem key={s.label}>
                            <Dot $color={s.color} $size={9} />
                            <Grow>{s.label}</Grow>
                            <b>{s.value}</b>
                          </ShareItem>
                        ))}
                      </ShareList>
                    </ShareRow>
                  </Card>

                  <Card>
                    <CardHead>
                      <CardTitle>أحدث التنبيهات</CardTitle>
                      <MoreLink href="#">عرض الكل</MoreLink>
                    </CardHead>
                    <AlertList>
                      <AlertItem>
                        <MdWarning size={21} color={c.red} />
                        <Grow>
                          <AlertTitle>تأخير في الوصول</AlertTitle>
                          <AlertNote>الحافلة B-102 في طريقها إلى مدرسة الرافدين</AlertNote>
                        </Grow>
                        <AlertTime>09:41 AM</AlertTime>
                      </AlertItem>
                      <AlertItem>
                        <MdBuildCircle size={21} color={c.orange} />
                        <Grow>
                          <AlertTitle>صيانة مطلوبة</AlertTitle>
                          <AlertNote>الحافلة B-215 بحاجة إلى صيانة دورية</AlertNote>
                        </Grow>
                        <AlertTime>09:32 AM</AlertTime>
                      </AlertItem>
                    </AlertList>
                  </Card>

                  <Card>
                    <CardHead>
                      <CardTitle>أداء المنصة اليوم</CardTitle>
                    </CardHead>
                    <ScoreGrid>
                      {scores.map((s) => (
                        <Score key={s.label}>
                          <ScoreLabel>{s.label}</ScoreLabel>
                          <ScoreValue>{s.value}</ScoreValue>
                          <ScoreDelta>{s.delta}</ScoreDelta>
                          <ScoreWarning>BOTTOM OVERFLOWED BY {s.over} PIXELS</ScoreWarning>
                        </Score>
                      ))}
                    </ScoreGrid>
                  </Card>

                  <Card>
                    <CardHead>
                      <CardTitle>الإيرادات الشهرية (IQD)</CardTitle>
                    </CardHead>
                    <Revenue>1,245,630,000</Revenue>
                    <Growth>+15.8%</Growth>
                    <AreaChart viewBox="0 0 414 62" preserveAspectRatio="none" aria-hidden="true">
                      <defs>
                        <linearGradient id="revenueFill" x2="0" y2="1">
                          <stop stopColor="#7c4ddb" stopOpacity=".4" />
                          <stop offset="1" stopColor="#7c4ddb" stopOpacity="0" />
                        </linearGradient>
                      </defs>
                      <path d="M0 50L49 38L99 42L148 31L198 36L248 24L298 28L347 21L414 16V62H0z" fill="url(#revenueFill)" />
                      <path d="M0 50L49 38L99 42L148 31L198 36L248 24L298 28L347 21L414 16" fill="none" stroke="#7a50da" strokeWidth="3" />
                    </AreaChart>
                  </Card>
                </Column>
              </Board>
            </Page>
          </Main>
        </Body>
      </Window>
    </>
  );
}
